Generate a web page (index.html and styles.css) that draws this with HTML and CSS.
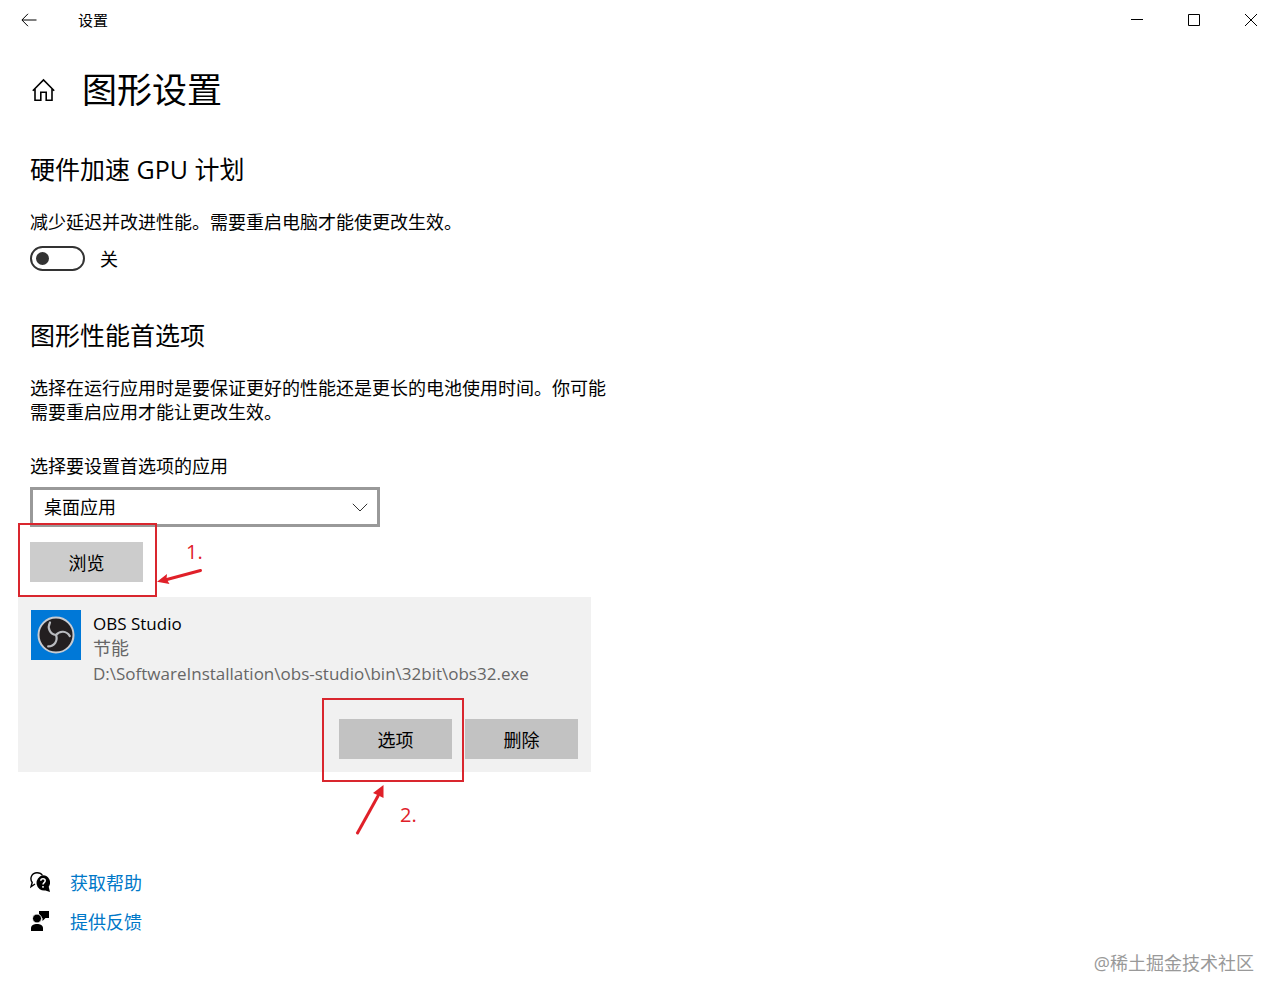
FILE: index.html
```html
<!DOCTYPE html>
<html lang="zh-CN">
<head>
  <meta charset="UTF-8" />
  <meta name="viewport" content="width=device-width, initial-scale=1.0"/>
  <title>设置</title>
  <link rel="stylesheet" href="styles.css">
</head>
<body>
  <header class="titlebar">
    <button type="button" class="back" aria-label="返回">
      <svg width="16" height="14" viewBox="0 0 16 14"><path d="M7 .8 .9 7 7 13.200M1 7h14.500"/></svg>
    </button>
    <span class="window-title">设置</span>
    <div class="window-buttons">
      <button type="button" aria-label="最小化">
        <svg width="12" height="12" viewBox="0 0 12 12"><path d="M0 5.500h12"/></svg>
      </button>
      <button type="button" aria-label="最大化">
        <svg width="12" height="12" viewBox="0 0 12 12"><path d="M.5.5h11v11H.5z"/></svg>
      </button>
      <button type="button" aria-label="关闭">
        <svg width="12" height="12" viewBox="0 0 12 12"><path d="M0 0l12 12M12 0 0 12"/></svg>
      </button>
    </div>
  </header>

  <main class="page">
    <div class="page-head">
      <a href="#" class="home" aria-label="主页">
        <svg width="24" height="24" viewBox="0 0 24 24"><path d="M.8 12.800 11.500 2l10.700 10.800M3 11v11.200h5.800v-8h5.400v8H20V11"/></svg>
      </a>
      <h1>图形设置</h1>
    </div>

    <section class="gpu">
      <h2>硬件加速 GPU 计划</h2>
      <p>减少延迟并改进性能。需要重启电脑才能使更改生效。</p>
      <div class="toggle-row">
        <input type="checkbox" class="toggle" id="gpu-toggle" role="switch">
        <label for="gpu-toggle">关</label>
      </div>
    </section>

    <section class="preference">
      <h2>图形性能首选项</h2>
      <p>选择在运行应用时是要保证更好的性能还是更长的电池使用时间。你可能需要重启应用才能让更改生效。</p>

      <label class="field-label" for="app-type">选择要设置首选项的应用</label>
      <div class="select-box">
        <select id="app-type">
          <option>桌面应用</option>
          <option>Microsoft Store 应用</option>
        </select>
        <svg class="chevron" width="16" height="9" viewBox="0 0 16 9"><path d="M.8.8 8 8l7.200-7.200"/></svg>
      </div>

      <div class="marked">
        <button type="button" class="btn">浏览</button>
        <span class="frame frame-browse"></span>
        <svg class="arrow arrow-browse" width="48" height="20" viewBox="0 0 48 20">
          <path class="shaft" d="M43.500 2.500 8 12"/>
          <path class="tip" d="M0 13.800 10 6 9.500 11l3 5z"/>
        </svg>
        <span class="step step-browse">1.</span>
      </div>
    </section>

    <section class="app-card">
      <div class="app-info">
        <svg class="app-icon" width="50" height="50" viewBox="0 0 50 50">
          <rect width="50" height="50" fill="#0078d7"/>
          <circle cx="25" cy="25" r="17.500" fill="#231f20" stroke="#c8ccd2" stroke-width="2"/>
          <g fill="none" stroke="#b9bbbf" stroke-width="2.200" stroke-linecap="round">
            <path d="M19 12.500C16 18 19 24 25 25"/>
            <path d="M19 12.500C16 18 19 24 25 25" transform="rotate(120 25 25)"/>
            <path d="M19 12.500C16 18 19 24 25 25" transform="rotate(240 25 25)"/>
          </g>
        </svg>
        <div class="app-text">
          <div class="app-name">OBS Studio</div>
          <div>节能</div>
          <div class="app-path">D:\SoftwareInstallation\obs-studio\bin\32bit\obs32.exe</div>
        </div>
      </div>
      <div class="app-actions">
        <div class="marked">
          <button type="button" class="btn">选项</button>
          <span class="frame frame-options"></span>
          <svg class="arrow arrow-options" width="32" height="52" viewBox="0 0 32 52">
            <path class="shaft" d="M2.500 48 23 11"/>
            <path class="tip" d="M28.500 0 28.500 13 23.500 10.500 18 8z"/>
          </svg>
          <span class="step step-options">2.</span>
        </div>
        <button type="button" class="btn">删除</button>
      </div>
    </section>

    <nav class="links">
      <a href="#">
        <svg width="20" height="22" viewBox="0 0 20 22">
          <path d="M5 12 1 14.800 2.200 10.500C-.8 6 2 .8 7 .8c2.500 0 4.500 1 5.500 2.700" fill="none" stroke="#000" stroke-width="1.400"/>
          <path d="M13 3.300a7.300 7.300 0 0 1 5.700 11.500l1.300 5.200-4.500-1.500A7.600 7.600 0 1 1 13 3.300z"/>
          <path d="M10.800 8.800c0-2.800 4.400-2.800 4.400 0 0 1.900-2.200 1.800-2.200 3.800M13 14v1.700" fill="none" stroke="#fff" stroke-width="1.500"/>
        </svg>
        <span>获取帮助</span>
      </a>
      <a href="#">
        <svg width="20" height="22" viewBox="0 0 20 22">
          <path d="M9 0h10v7h-3.500l-3 3V7H9z"/>
          <circle cx="7" cy="7.500" r="4.500" stroke="#fff"/>
          <path d="M1 20v-3c0-5.500 12-5.500 12 0v3z"/>
        </svg>
        <span>提供反馈</span>
      </a>
    </nav>
  </main>

  <footer class="watermark">@稀土掘金技术社区</footer>
</body>
</html>
```
FILE: styles.css
```css
* {
  box-sizing: border-box;
}

body {
  margin: 0;
  background: #fff;
  color: #000;
  font-family: "Open Sans", "Noto Sans CJK SC", sans-serif;
  font-size: 18px;
  line-height: 24px;
}

h1, h2, p {
  margin: 0;
  font-weight: 400;
}

button, select {
  font: inherit;
  color: inherit;
}

a {
  color: #0078c8;
  text-decoration: none;
}

svg {
  display: block;
}

/* Title bar */
.titlebar {
  display: flex;
  align-items: center;
  height: 40px;
  padding-right: 1px;
  font-size: 15px;
}

.titlebar button {
  display: flex;
  align-items: center;
  justify-content: center;
  height: 40px;
  padding: 0;
  border: none;
  background: none;
}

.titlebar path {
  fill: none;
  stroke: #000;
}

.back {
  width: 58px;
}

.window-title {
  flex: 1;
  padding-left: 20px;
}

.window-buttons {
  display: flex;
}

.window-buttons button {
  width: 57px;
}

/* Page */
.page {
  max-width: 608px;
  padding-left: 18px;
}

.page-head,
.gpu,
.preference {
  padding-left: 12px;
}

.page-head {
  display: flex;
  align-items: center;
  gap: 26px;
  padding-top: 27px;
}

.home {
  padding-left: 2px;
}

.home path {
  fill: none;
  stroke: #000;
  stroke-width: 1.6;
}

h1 {
  font-size: 35px;
  line-height: 46px;
}

h2 {
  margin-bottom: 24px;
  font-size: 25px;
  line-height: 34px;
}

.gpu {
  padding-top: 39px;
}

.toggle-row {
  display: flex;
  align-items: center;
  gap: 15px;
  height: 25px;
  margin-top: 12px;
}

.toggle {
  appearance: none;
  display: flex;
  align-items: center;
  width: 55px;
  height: 25px;
  margin: 0;
  padding-left: 4px;
  border: 2px solid #333;
  border-radius: 13px;
}

.toggle::before {
  content: "";
  width: 13px;
  height: 13px;
  border-radius: 50%;
  background: #333;
}

.toggle:checked {
  justify-content: flex-end;
  padding-right: 4px;
}

.preference {
  padding-top: 47px;
}

.field-label {
  display: block;
  margin: 30px 0 9px;
}

.select-box {
  position: relative;
  max-width: 350px;
  margin-bottom: 15px;
}

.select-box select {
  appearance: none;
  display: block;
  width: 100%;
  height: 40px;
  padding: 0 40px 0 11px;
  border: 3px solid #999;
  border-radius: 0;
  background: #fff;
}

.chevron {
  position: absolute;
  top: 16px;
  right: 12px;
  pointer-events: none;
}

.chevron path {
  fill: none;
  stroke: #333;
}

.btn {
  display: block;
  width: 113px;
  height: 40px;
  padding: 2px 0 0;
  border: none;
  background: #ccc;
}

/* App card */
.app-card {
  max-width: 573px;
  margin-top: 15px;
  padding: 13px;
  background: #f1f1f1;
}

.app-info {
  display: flex;
  gap: 12px;
}

.app-icon {
  flex: none;
}

.app-text {
  padding-top: 1px;
  color: #666;
  line-height: 25px;
}

.app-name {
  color: #000;
}

.app-name,
.app-path {
  font-size: 17px;
}

.app-actions {
  display: flex;
  justify-content: flex-end;
  gap: 13px;
  margin-top: 33px;
}

.app-actions .btn {
  background: #c2c2c2;
}

/* Red step marks over the buttons */
.marked {
  position: relative;
  width: 113px;
}

.frame,
.arrow,
.step {
  position: absolute;
  pointer-events: none;
}

.frame {
  border: 2px solid #d9262e;
}

.frame-browse {
  inset: -19px -14px -15px -12px;
}

.frame-options {
  inset: -21px -12px -23px -17px;
}

.shaft {
  fill: none;
  stroke: #e02029;
  stroke-width: 3;
  stroke-linecap: round;
}

.tip {
  fill: #e02029;
}

.arrow-browse {
  top: 26px;
  left: 127px;
}

.arrow-options {
  top: 66px;
  left: 16px;
}

.step {
  color: #e02029;
  font-size: 20px;
}

.step-browse {
  top: -2px;
  left: 156px;
}

.step-options {
  top: 84px;
  left: 61px;
}

/* Links */
.links {
  display: flex;
  flex-direction: column;
  align-items: flex-start;
  gap: 15px;
  margin-top: 99px;
  padding-left: 12px;
}

.links a {
  display: flex;
  align-items: center;
  gap: 20px;
}

.watermark {
  padding: 17px 26px 20px;
  color: #999;
  text-align: right;
}
```
